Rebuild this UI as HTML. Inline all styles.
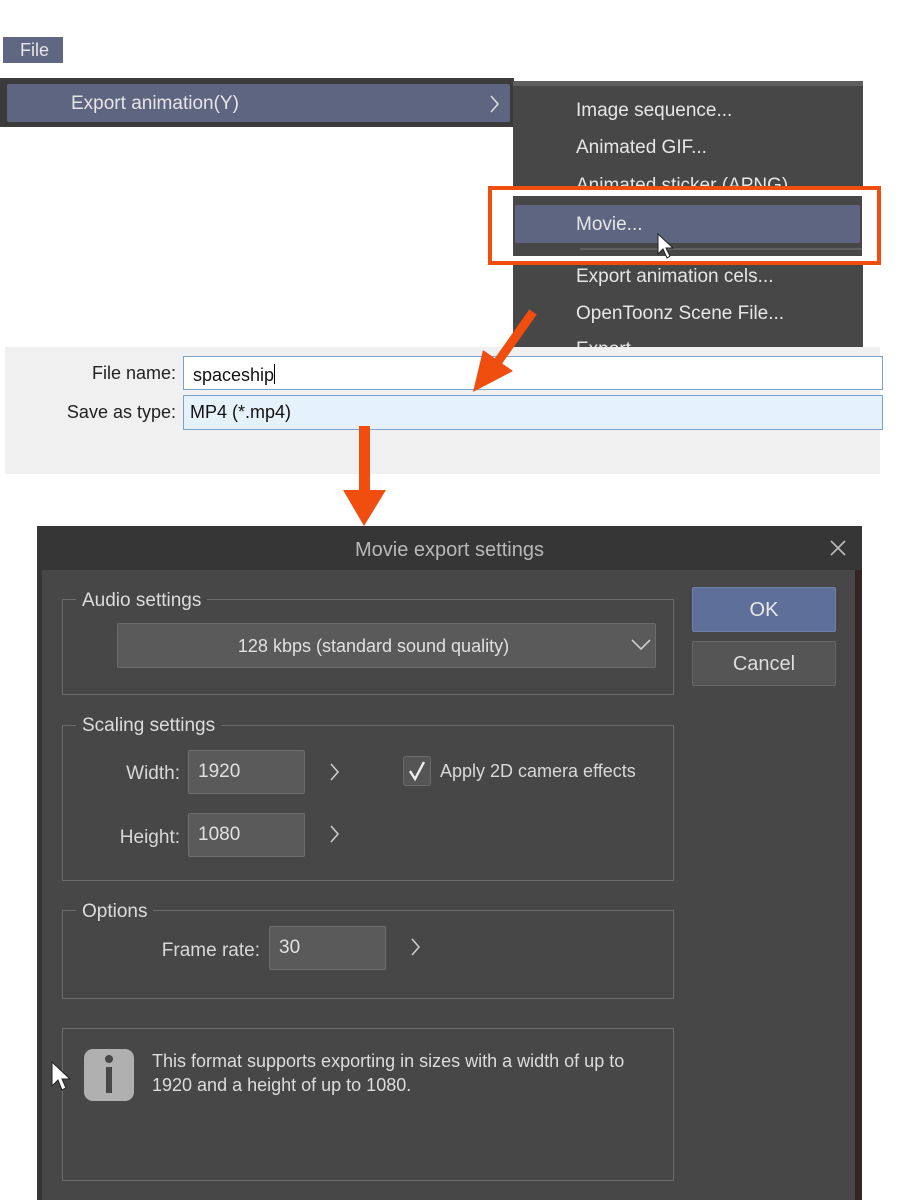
<!DOCTYPE html>
<html><head><meta charset="utf-8"><style>
*{margin:0;padding:0;box-sizing:border-box}
body{width:900px;height:1200px;background:#fff;position:relative;overflow:hidden;font-family:"Liberation Sans",sans-serif;}
.a{position:absolute}
.t{position:absolute;white-space:nowrap;line-height:1;font-size:19px}
.lt{color:#e6e6e6}
.dlg{color:#d8d8d8}
.grp{position:absolute;border:1.5px solid #6c6c6c}
.leg{position:absolute;background:#474747;padding:0 6px;color:#dcdcdc;font-size:19px;line-height:1;white-space:nowrap}
.inp{position:absolute;background:#5a5a5a;border:1.5px solid #6e6e6e;border-radius:2px;color:#e0e0e0;font-size:19px;padding:11px 0 0 9px;line-height:1}
</style></head><body>
<div class="a" style="left:3px;top:37px;width:60px;height:26px;background:#5f6782"></div>
<div class="t lt" style="left:20px;top:41px;font-size:18px">File</div>
<div class="a" style="left:0;top:78px;width:514px;height:49px;background:#3b3b3b"></div>
<div class="a" style="left:7px;top:84px;width:503px;height:38px;background:#5d6580;border-radius:2px"></div>
<div class="t lt" style="left:71px;top:94px">Export animation(Y)</div>
<svg class="a" style="left:488px;top:94px" width="14" height="20"><path d="M3 2 L10 10 L3 18" stroke="#ddd" stroke-width="1.6" fill="none"/></svg>
<div class="a" style="left:513px;top:81px;width:350px;height:266px;background:#474747"></div>
<div class="a" style="left:513px;top:81px;width:350px;height:5px;background:#5e5e5e"></div>
<div class="t lt" style="left:576px;top:101px">Image sequence...</div>
<div class="t lt" style="left:576px;top:138px">Animated GIF...</div>
<div class="t lt" style="left:576px;top:176px">Animated sticker (APNG)</div>
<div class="a" style="left:488px;top:186px;width:393px;height:79px;border:4px solid #f04e0f;background:#fff"></div>
<div class="a" style="left:513px;top:196px;width:349px;height:60px;background:#474747"></div>
<div class="a" style="left:515px;top:205px;width:345px;height:38px;background:#5d6580;border-radius:2px"></div>
<div class="a" style="left:580px;top:248px;width:282px;height:2px;background:#606060"></div>
<div class="t lt" style="left:576px;top:215px">Movie...</div>
<svg class="a" style="left:656px;top:233px" width="20" height="28"><path d="M2 1 L2 21 L7 16 L11 25 L14 23 L10 15 L17 15 Z" fill="#fff" stroke="#222" stroke-width="1"/></svg>
<div class="a" style="left:513px;top:268px;width:350px;height:79px;background:#474747"></div>
<div class="t lt" style="left:576px;top:267px">Export animation cels...</div>
<div class="t lt" style="left:576px;top:304px">OpenToonz Scene File...</div>
<div class="t lt" style="left:576px;top:340px">Export ...</div>
<div class="a" style="left:5px;top:347px;width:875px;height:127px;background:#f0f0f0"></div>
<div class="t" style="left:0;width:176px;text-align:right;top:364px;color:#222;font-size:18px">File name:</div>
<div class="t" style="left:0;width:176px;text-align:right;top:403px;color:#222;font-size:18px">Save as type:</div>
<div class="a" style="left:183px;top:356px;width:700px;height:34px;background:#fff;border:1.5px solid #7aa3cc"></div>
<div class="t" style="left:193px;top:364px;color:#111;font-size:18px">spaceship<span style="display:inline-block;width:1px;height:20px;background:#000;vertical-align:-3px"></span></div>
<div class="a" style="left:183px;top:395px;width:700px;height:35px;background:#e5f1fb;border:1.5px solid #7aa3cc"></div>
<div class="t" style="left:190px;top:403px;color:#111;font-size:18px">MP4 (*.mp4)</div>
<svg class="a" style="left:0;top:0" width="900" height="540">
<line x1="533" y1="312" x2="497" y2="363" stroke="#f04e0f" stroke-width="9"/>
<polygon points="473,392 483,350 513,371" fill="#f04e0f"/>
<rect x="359" y="426" width="11" height="66" fill="#f04e0f"/>
<polygon points="343,490 386,490 364,526" fill="#f04e0f"/>
</svg>
<div class="a" style="left:37px;top:526px;width:825px;height:674px;background:#363636"></div>
<div class="a" style="left:42px;top:570px;width:813px;height:630px;background:#474747"></div>
<div class="a" style="left:855px;top:570px;width:7px;height:630px;background:#352525"></div>
<div class="t" style="left:37px;width:825px;text-align:center;top:540px;color:#b8b8b8;font-size:20px">Movie export settings</div>
<svg class="a" style="left:829px;top:539px" width="18" height="18"><path d="M2 2 L16 16 M16 2 L2 16" stroke="#bbb" stroke-width="1.6"/></svg>
<div class="grp" style="left:62px;top:599px;width:612px;height:96px"></div>
<div class="leg" style="left:76px;top:591px">Audio settings</div>
<div class="a" style="left:117px;top:623px;width:539px;height:45px;background:#5a5a5a;border:1.5px solid #6c6c6c;border-radius:2px"></div>
<div class="t dlg" style="left:117px;width:513px;text-align:center;top:637px;color:#e0e0e0;font-size:18px">128 kbps (standard sound quality)</div>
<svg class="a" style="left:630px;top:638px" width="22" height="14"><path d="M2 2 L11 11 L20 2" stroke="#ccc" stroke-width="1.6" fill="none"/></svg>
<div class="a" style="left:692px;top:587px;width:144px;height:45px;background:#5e6f9a;border:1.5px solid #6f80aa;border-radius:2px"></div>
<div class="t" style="left:692px;width:144px;text-align:center;top:600px;color:#e8e8e8;font-size:20px">OK</div>
<div class="a" style="left:692px;top:641px;width:144px;height:45px;background:#555;border:1.5px solid #686868;border-radius:2px"></div>
<div class="t" style="left:692px;width:144px;text-align:center;top:654px;color:#ddd;font-size:20px">Cancel</div>
<div class="grp" style="left:62px;top:725px;width:612px;height:156px"></div>
<div class="leg" style="left:76px;top:716px">Scaling settings</div>
<div class="t dlg" style="left:0;width:180px;text-align:right;top:764px">Width:</div>
<div class="inp" style="left:188px;top:750px;width:117px;height:44px">1920</div>
<svg class="a" style="left:328px;top:762px" width="14" height="20"><path d="M3 2 L10 10 L3 18" stroke="#ccc" stroke-width="1.6" fill="none"/></svg>
<div class="a" style="left:403px;top:756px;width:28px;height:30px;background:#555;border:1.5px solid #6a6a6a;border-radius:3px"></div>
<svg class="a" style="left:405px;top:758px" width="24" height="26"><path d="M5 13 L10 21 L19 4" stroke="#eee" stroke-width="2.4" fill="none"/></svg>
<div class="t dlg" style="left:440px;top:762px;font-size:18px">Apply 2D camera effects</div>
<div class="t dlg" style="left:0;width:180px;text-align:right;top:828px">Height:</div>
<div class="inp" style="left:188px;top:813px;width:117px;height:44px">1080</div>
<svg class="a" style="left:328px;top:824px" width="14" height="20"><path d="M3 2 L10 10 L3 18" stroke="#ccc" stroke-width="1.6" fill="none"/></svg>
<div class="grp" style="left:62px;top:910px;width:612px;height:89px"></div>
<div class="leg" style="left:76px;top:902px">Options</div>
<div class="t dlg" style="left:0;width:260px;text-align:right;top:941px">Frame rate:</div>
<div class="inp" style="left:269px;top:926px;width:117px;height:44px">30</div>
<svg class="a" style="left:409px;top:937px" width="14" height="20"><path d="M3 2 L10 10 L3 18" stroke="#ccc" stroke-width="1.6" fill="none"/></svg>
<div class="grp" style="left:62px;top:1028px;width:612px;height:153px"></div>
<div class="a" style="left:84px;top:1049px;width:50px;height:52px;background:#b0b0b0;border-radius:9px"></div>
<div class="a" style="left:105px;top:1055px;width:8px;height:8px;background:#474747;border-radius:50%"></div>
<div class="a" style="left:106px;top:1067px;width:6px;height:26px;background:#474747"></div>
<div class="t" style="left:152px;top:1049px;color:#dcdcdc;font-size:18px;line-height:24px">This format supports exporting in sizes with a width of up to<br>1920 and a height of up to 1080.</div>
<svg class="a" style="left:50px;top:1061px" width="22" height="34"><path d="M2 1 L2 25 L8 19 L12 29 L16 27 L12 18 L20 18 Z" fill="#fff" stroke="#222" stroke-width="1"/></svg>
</body></html>
